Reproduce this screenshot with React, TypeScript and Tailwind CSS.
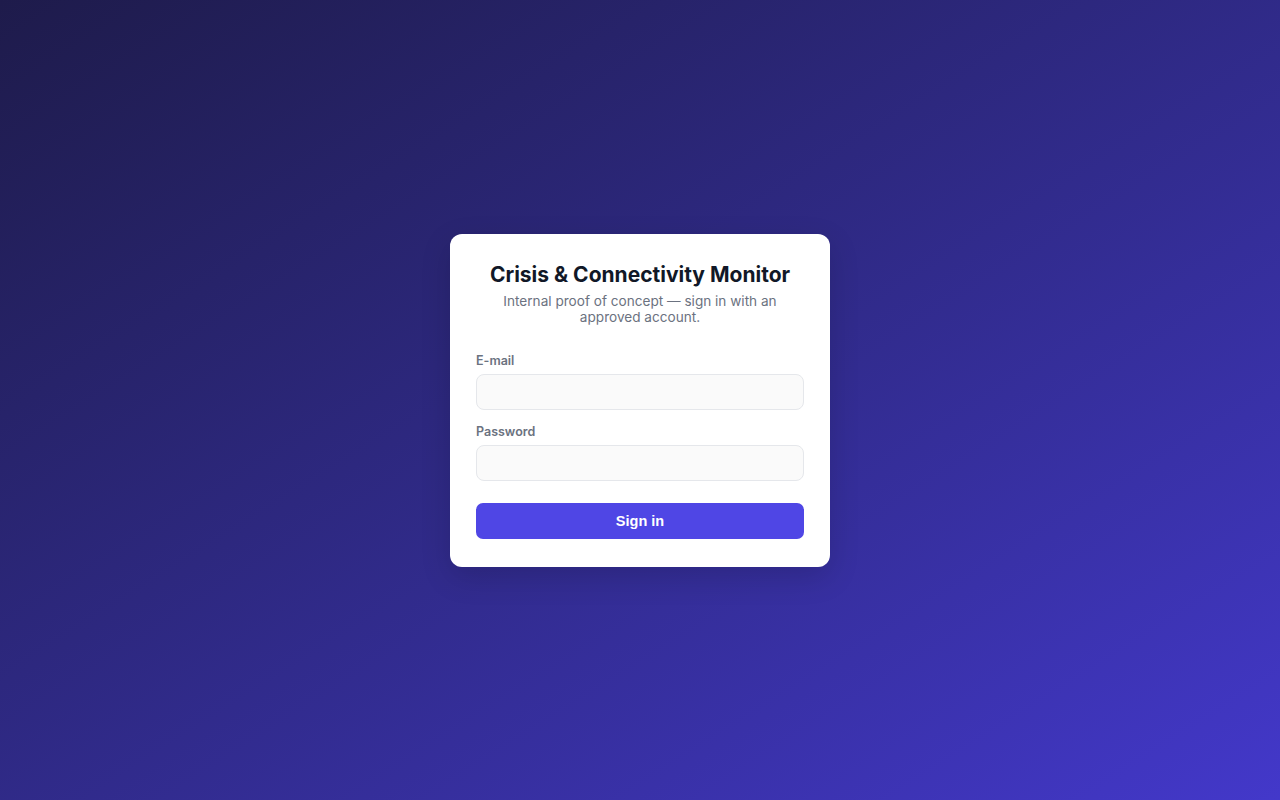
import React from "react";

export default function App() {
  return (
    <div
      className="min-h-screen w-full flex items-center justify-center bg-gradient-to-br from-[#1e1b4b] to-[#4338ca]"
      style={{ fontFamily: "Inter, 'Noto Sans', sans-serif" }}
    >
      <div className="w-[380px] bg-white rounded-[12px] px-[26px] pt-[28px] pb-[28px] shadow-[0_10px_30px_rgba(0,0,0,0.15)]">
        <h1 className="text-[21px] leading-[24px] font-bold text-[#111827] text-center mt-[1px]">
          Crisis &amp; Connectivity Monitor
        </h1>
        <p className="mt-[6px] text-[13.6px] leading-[16px] text-[#6b7280] text-center px-[16px]">
          Internal proof of concept — sign in with an approved account.
        </p>
        <form className="mt-[27px] flex flex-col" onSubmit={(e) => e.preventDefault()}>
          <label className="text-[12.5px] leading-[16px] font-semibold text-[#6b7280] mt-[1px]">E-mail</label>
          <input
            type="email"
            className="mt-[5px] h-[36px] w-full rounded-[8px] border border-[#e5e7eb] bg-[#fafafa] px-3 text-[14px] outline-none"
          />
          <label className="mt-[14px] text-[12.5px] leading-[16px] font-semibold text-[#6b7280]">Password</label>
          <input
            type="password"
            className="mt-[5px] h-[36px] w-full rounded-[8px] border border-[#e5e7eb] bg-[#fafafa] px-3 text-[14px] outline-none"
          />
          <button
            type="submit"
            className="mt-[22px] h-[36px] w-full rounded-[7px] bg-[#4f46e5] text-white text-[14.5px] font-bold leading-[36px]"
            style={{ fontFamily: "'Liberation Sans', Arial, sans-serif" }}
          >
            Sign in
          </button>
        </form>
      </div>
    </div>
  );
}
